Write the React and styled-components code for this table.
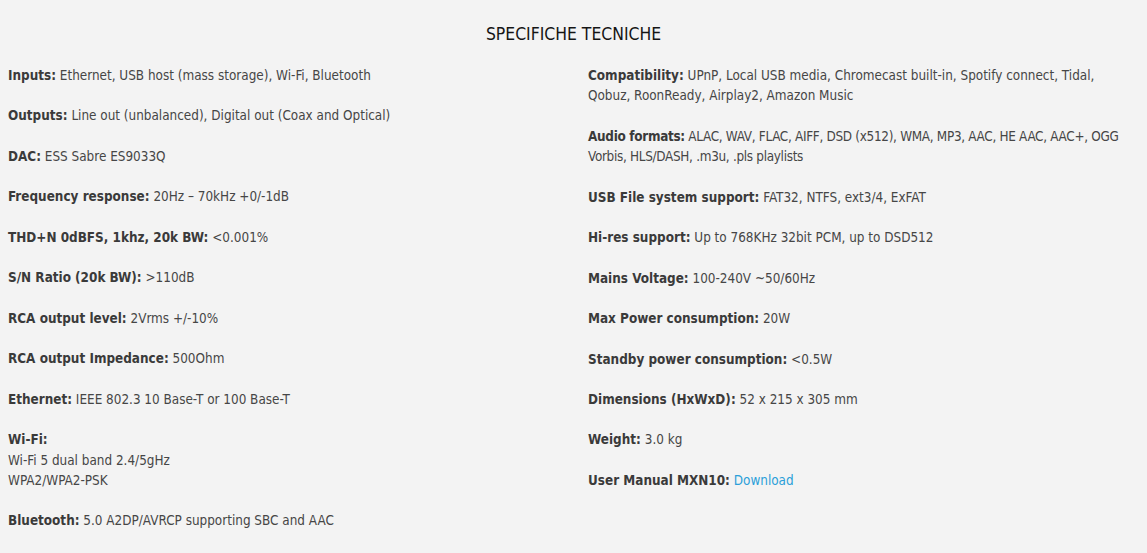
import styled, { createGlobalStyle } from "styled-components";

const Global = createGlobalStyle`
  html, body {
    margin: 0;
    padding: 0;
    background: #f3f3f3;
  }
  body {
    font-family: "DejaVu Sans Condensed", "DejaVu Sans", sans-serif;
  }
`;

const Page = styled.div`
  padding: 24px 8px 0 8px;
  height: 553px;
  box-sizing: border-box;
  overflow: hidden;
`;

const Title = styled.h2`
  margin: 0 0 22px 0;
  text-align: center;
  font-size: 17.4px;
  line-height: 20px;
  font-weight: 400;
  color: #151515;
`;

const Columns = styled.div`
  display: grid;
  grid-template-columns: 551px 540px;
  column-gap: 29px;
`;

const Column = styled.div`
  display: flex;
  flex-direction: column;
`;

const Spec = styled.p`
  margin: 0 0 20.2px 0;
  font-size: 13.4px;
  line-height: 20.3px;
  color: #464646;
  letter-spacing: ${(p) => (p.$tight ? "-0.3px" : "normal")};
`;

const Label = styled.strong`
  font-weight: 700;
  color: #3a3a3a;
`;

const Link = styled.a`
  color: #2b9fd9;
  text-decoration: none;
`;

const left = [
  ["Inputs:", "Ethernet, USB host (mass storage), Wi-Fi, Bluetooth"],
  ["Outputs:", "Line out (unbalanced), Digital out (Coax and Optical)"],
  ["DAC:", "ESS Sabre ES9033Q"],
  ["Frequency response:", "20Hz – 70kHz +0/-1dB"],
  ["THD+N 0dBFS, 1khz, 20k BW:", "<0.001%"],
  ["S/N Ratio (20k BW):", ">110dB"],
  ["RCA output level:", "2Vrms +/-10%"],
  ["RCA output Impedance:", "500Ohm"],
  ["Ethernet:", "IEEE 802.3 10 Base-T or 100 Base-T"],
];

const right = [
  ["Compatibility:", "UPnP, Local USB media, Chromecast built-in, Spotify connect, Tidal, Qobuz, RoonReady, Airplay2, Amazon Music"],
  ["Audio formats:", "ALAC, WAV, FLAC, AIFF, DSD (x512), WMA, MP3, AAC, HE AAC, AAC+, OGG Vorbis, HLS/DASH, .m3u, .pls playlists", true],
  ["USB File system support:", "FAT32, NTFS, ext3/4, ExFAT"],
  ["Hi-res support:", "Up to 768KHz 32bit PCM, up to DSD512"],
  ["Mains Voltage:", "100-240V ~50/60Hz"],
  ["Max Power consumption:", "20W"],
  ["Standby power consumption:", "<0.5W"],
  ["Dimensions (HxWxD):", "52 x 215 x 305 mm"],
  ["Weight:", "3.0 kg"],
];

const App = () => {
  return (
    <Page>
      <Global />
      <Title>SPECIFICHE TECNICHE</Title>
      <Columns>
        <Column>
          {left.map(([k, v]) => (
            <Spec key={k}>
              <Label>{k}</Label> {v}
            </Spec>
          ))}
          <Spec>
            <Label>Wi-Fi:</Label>
            <br />
            Wi-Fi 5 dual band 2.4/5gHz
            <br />
            WPA2/WPA2-PSK
          </Spec>
          <Spec>
            <Label>Bluetooth:</Label> 5.0 A2DP/AVRCP supporting SBC and AAC
          </Spec>
        </Column>
        <Column>
          {right.map(([k, v, tight]) => (
            <Spec key={k} $tight={tight}>
              <Label>{k}</Label> {v}
            </Spec>
          ))}
          <Spec>
            <Label>User Manual MXN10:</Label> <Link href="#">Download</Link>
          </Spec>
        </Column>
      </Columns>
    </Page>
  );
};

export default App;
